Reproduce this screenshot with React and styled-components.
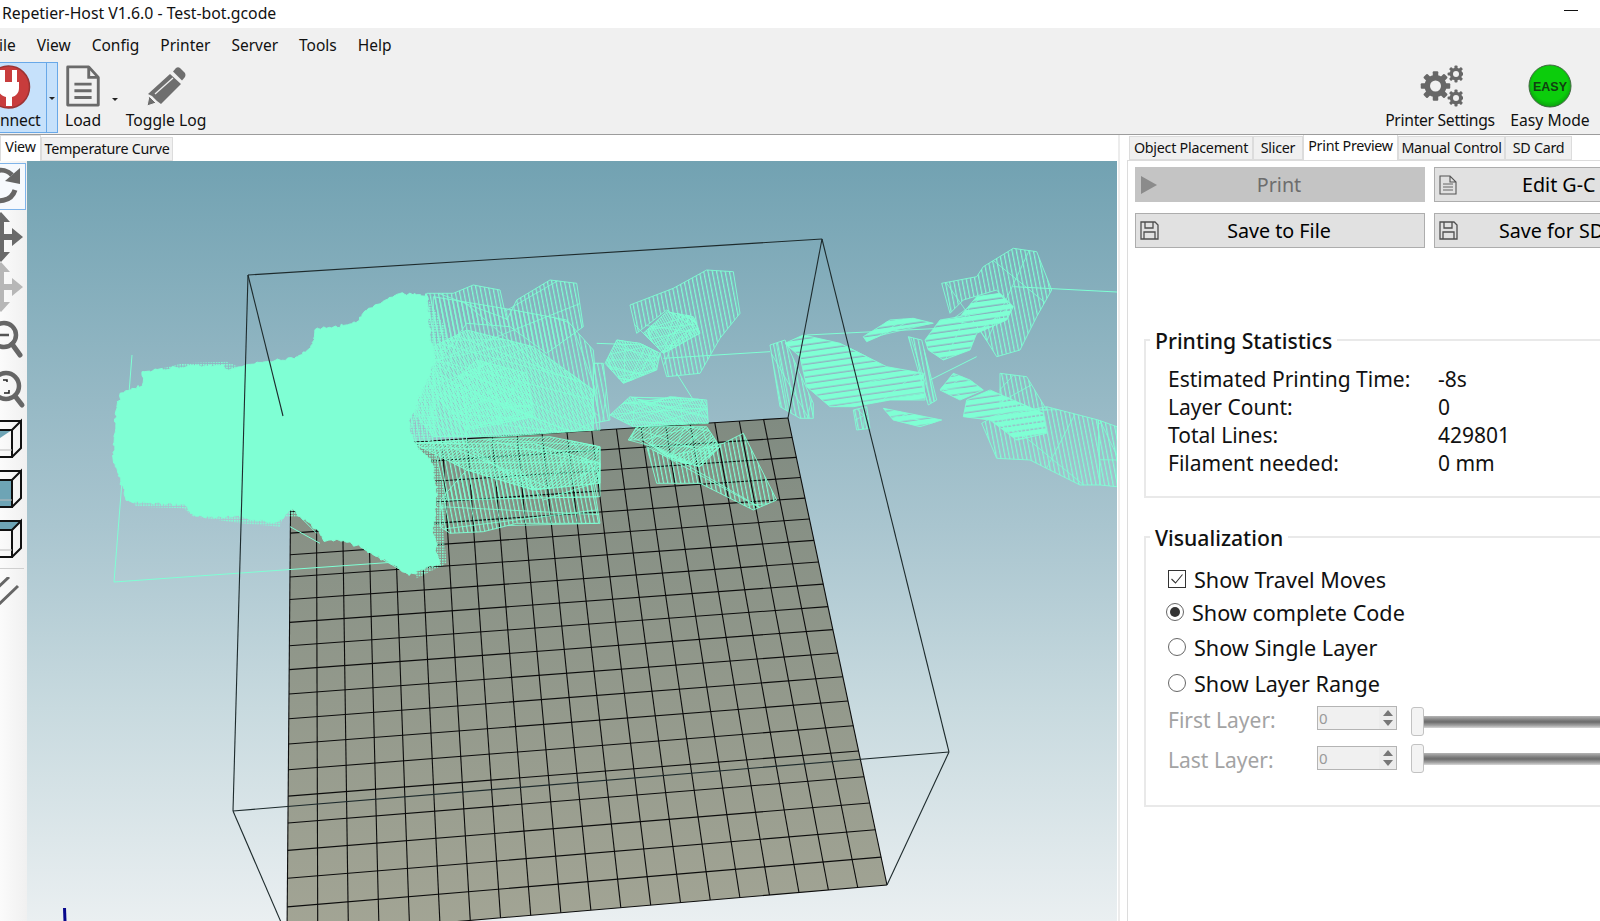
import React from "react";
import styled, { createGlobalStyle } from "styled-components";

const FONT = `"Noto Sans", "Open Sans", "Liberation Sans", sans-serif`;
const AQUA = "#7fffd4";

const Global = createGlobalStyle`
  html, body { margin: 0; padding: 0; background: #fff; overflow: hidden; }
  #root { width: 1600px; height: 921px; }
`;

const Shell = styled.div`
  width: 1600px; height: 921px; overflow: hidden; display: flex; flex-direction: column;
  font-family: ${FONT}; color: #111; background: #fff;
`;
const TitleBar = styled.div`
  height: 28px; flex: none; display: flex; align-items: center; justify-content: space-between;
  padding: 0 22px 2px 2px; font-size: 15.8px; box-sizing: border-box;
`;
const MinimizeMark = styled.div`width: 14px; height: 1px; background: #111; margin-top: -6px;`;
const Ribbon = styled.header`
  height: 107px; flex: none; box-sizing: border-box; background: #f0f0f0; border-bottom: 1px solid #9c9c9c;
  display: flex; flex-direction: column;
`;
const MenuBar = styled.nav`
  height: 32px; flex: none; display: flex; align-items: center; gap: 21px; font-size: 15.5px; padding-top: 1px; box-sizing: border-box; margin-left: -1px;
`;
const MenuItem = styled.span``;
const ToolRow = styled.div`display: flex; justify-content: space-between; height: 73px; align-items: flex-start;`;
const ToolGroup = styled.div`display: flex; align-items: flex-start; padding-right: ${(p) => p.$pr || 0}px;`;
const SplitButton = styled.div`
  display: flex; height: 71px; width: 58px; margin-top: 2px; box-sizing: border-box; background: #c6e1fb; border: 1px solid #68a8e8; border-left: 0;
`;
const SplitMain = styled.div`
  width: 47px; box-sizing: border-box; border-right: 1px solid #68a8e8; display: flex; flex-direction: column; overflow: hidden;
`;
const SplitArrow = styled.div`flex: 1; display: flex; justify-content: center; padding-top: 34px; box-sizing: border-box;`;
const Caret = styled.span`
  width: 0; height: 0; border-left: 3px solid transparent; border-right: 3px solid transparent; border-top: 3px solid #222;
  margin: ${(p) => p.$margin || 0};
`;
const ToolLabel = styled.span`
  font-size: 15.7px; line-height: 22px; white-space: nowrap; letter-spacing: ${(p) => p.$track || 0}px;
`;
const ConnectLabel = styled(ToolLabel)`margin: -1px 0 0 0; letter-spacing: -0.2px;`;
const Tool = styled.div`
  display: flex; flex-direction: column; align-items: center; width: ${(p) => p.$w}px; margin-left: ${(p) => p.$ml || 0}px; flex: none; padding-top: 3px;
`;
const IconSlot = styled.div`height: 46px; display: flex; align-items: center; justify-content: center; flex: none;`;
const ToolIcon = styled.svg`display: block; flex: none;`;

const Body = styled.div`flex: 1; display: flex; min-height: 0;`;
const LeftPane = styled.section`width: 1120px; flex: none; display: flex; flex-direction: column; border-right: 2px solid #ececec; box-sizing: border-box;`;
const TabStrip = styled.div`height: 26px; flex: none; display: flex; align-items: flex-end; padding-left: ${(p) => p.$pad || 0}px;`;
const Tab = styled.div`
  box-sizing: border-box; height: ${(p) => (p.$active ? 26 : 24)}px; width: ${(p) => p.$w}px; display: flex; align-items: center; justify-content: center;
  font-size: 14.3px; letter-spacing: -0.25px; white-space: nowrap; background: ${(p) => (p.$active ? "#fff" : "#f0f0f0")};
  border: 1px solid #dcdcdc; border-bottom: ${(p) => (p.$active ? "0" : "1px solid #dcdcdc")};
  padding-bottom: ${(p) => (p.$active ? 4 : 1)}px;
`;
const ViewerRow = styled.div`flex: 1; display: flex; min-height: 0; width: 1117px;`;
const ViewBar = styled.aside`
  width: 27px; flex: none; box-sizing: border-box; padding-top: 1px; background: linear-gradient(90deg, #fbfbfb, #f0f0f0);
  display: flex; flex-direction: column;
`;
const ViewBtn = styled.div`
  height: 50px; flex: none; box-sizing: border-box; overflow: hidden; width: 26px;
  ${(p) => p.$on && "border: 1px solid #7fb4ea; border-left: 0; height: 47px; margin: 1px 0 2px; background: #f6f9fd;"}
`;
const ViewIcon = styled.svg`display: block; margin-left: -20px; flex: none;`;
const ViewSep = styled.div`height: 1px; background: #cfcfcf; width: 24px; margin: 6px 0 8px;`;
const Scene = styled.svg`
  flex: 1; display: block; min-width: 0; height: 760px;
  background: linear-gradient(180deg, #72a2b2 0%, #a9c5cf 48%, #c8dadf 72%, #eaeff1 100%);
`;

const RightPane = styled.section`flex: 1; display: flex; flex-direction: column; margin-left: 7px; min-width: 0; overflow: hidden;`;
const RightTabs = styled(TabStrip)`border-bottom: 1px solid #dcdcdc; box-sizing: content-box; height: 25px;`;
const PanelBody = styled.div`
  flex: 1; border-left: 1px solid #dcdcdc; padding: 6px 0 0 7px; display: flex; flex-direction: column; width: 480px; box-sizing: border-box;
`;
const ActionGrid = styled.div`display: grid; grid-template-columns: 290px 290px; column-gap: 9px; row-gap: 11px;`;
const ActionBtn = styled.div`
  height: 35px; box-sizing: border-box; display: grid; grid-template-columns: 27px 1fr 29px; align-items: center; font-size: 19.7px;
  background: ${(p) => (p.$disabled ? "#c4c4c4" : "#e1e1e1")}; color: ${(p) => (p.$disabled ? "#6d6d6d" : "#000")};
  border: 1px solid ${(p) => (p.$disabled ? "#c4c4c4" : "#adadad")}; white-space: nowrap;
`;
const ActionIcon = styled.svg`display: block; margin-left: 4px;`;
const ActionText = styled.span`
  text-align: ${(p) => (p.$inset ? "left" : "center")}; padding-left: ${(p) => p.$inset || 0}px;
`;
const Group = styled.div`
  position: relative; width: 470px; box-sizing: border-box; border: 2px solid #e9e9e9; border-right: 0; margin-left: 9px;
  height: ${(p) => p.$h}px; margin-top: ${(p) => p.$mt}px; padding: ${(p) => p.$pad};
`;
const Legend = styled.div`
  position: absolute; left: 4px; top: -14px; height: 28px; line-height: 27px; background: #fff; padding: 0 5px; font-size: 21.2px; font-weight: 500;
`;
const StatGrid = styled.div`display: grid; grid-template-columns: 270px 1fr; grid-auto-rows: 28px; align-items: center; font-size: 21px;`;
const Stat = styled.span``;
const OptionRow = styled.div`
  display: flex; align-items: center; height: ${(p) => p.$h}px; font-size: 21.6px; gap: ${(p) => p.$gap || 8}px; margin-left: ${(p) => p.$ml || 0}px;
`;
const CheckBox = styled.span`
  width: 18px; height: 18px; box-sizing: border-box; border: 1px solid #333; display: flex; align-items: center; justify-content: center; background: #fff;
`;
const Radio = styled.span`
  width: 18px; height: 18px; box-sizing: border-box; border-radius: 50%; border: 1px solid #666; display: flex; align-items: center; justify-content: center; background: #fff;
  &::after { content: ""; width: 10px; height: 10px; border-radius: 50%; background: ${(p) => (p.$on ? "#333" : "transparent")}; }
`;
const LayerRow = styled.div`display: flex; align-items: center; height: 40px; color: #a3a3a3; font-size: 21px;`;
const LayerName = styled.span`width: 149px; flex: none;`;
const Spinner = styled.div`
  width: 80px; height: 24px; box-sizing: border-box; border: 1px solid #b4b4b4; background: #f0f0f0; display: flex; justify-content: space-between; align-items: center;
  padding-left: 1px; font-size: 15px; color: #9a9a9a; flex: none; margin-top: -4px;
`;
const SpinArrows = styled.div`width: 17px; height: 22px; display: flex; flex-direction: column; align-items: center; justify-content: space-around; background: #ececec; padding: 1px 0; box-sizing: border-box;`;
const SpinUp = styled.span`border-left: 5px solid transparent; border-right: 5px solid transparent; border-bottom: 6px solid #777;`;
const SpinDown = styled.span`border-left: 5px solid transparent; border-right: 5px solid transparent; border-top: 6px solid #777;`;
const Slider = styled.div`
  position: relative; flex: 1; height: 12px; margin: ${(p) => p.$dy}px 0 0 14px;
  background: linear-gradient(180deg, #b5b5b5, #7c7c7c 35%, #6c6c6c 50%, #a5a5a5 80%, #d8d8d8);
`;
const Thumb = styled.span`position: absolute; left: 0; top: -9px; width: 13px; height: 29px; box-sizing: border-box; border: 1px solid #c2c2c2; border-radius: 3px; background: #f3f3f3;`;

/* ---- 3D scene data: outlines are kept in the pixel space of two reference regions ---- */
const fromA = (a) => { const o = []; for (let i = 0; i < a.length; i += 2) o.push([100 + a[i] / 3, 230 + a[i + 1] / 3]); return o; };
const fromB = (a) => { const o = []; for (let i = 0; i < a.length; i += 2) o.push([600 + a[i] / 3, 230 + a[i + 1] / 3]); return o; };
const pts = (p) => p.map((q) => q.map((n) => n.toFixed(1)).join(",")).join(" ");

let seed = 11;
const rnd = () => { seed = (seed * 16807) % 2147483647; return seed / 2147483647; };
const jag = (p, step, amp) => {
  const out = [];
  p.forEach((a, i) => {
    const b = p[(i + 1) % p.length];
    const n = Math.max(1, Math.round(Math.hypot(b[0] - a[0], b[1] - a[1]) / step));
    for (let k = 0; k < n; k++) {
      const t = k / n;
      out.push([a[0] + (b[0] - a[0]) * t + (rnd() - 0.5) * amp, a[1] + (b[1] - a[1]) * t + (rnd() - 0.5) * amp]);
    }
  });
  return out;
};
const edgePoint = (p) => {
  const i = Math.floor(rnd() * p.length), a = p[i], b = p[(i + 1) % p.length], t = rnd();
  return [a[0] + (b[0] - a[0]) * t, a[1] + (b[1] - a[1]) * t];
};

const MASS = fromA([980,195,900,190,850,215,790,250,770,275,710,290,650,295,635,350,600,380,440,405,380,420,370,405,250,410,130,425,125,465,65,490,50,520,40,680,65,770,85,815,250,825,285,860,420,860,530,880,575,835,590,850,650,900,670,935,730,930,800,960,930,1035,1015,1000,1000,900,1010,800,995,690,950,650,925,590,960,500,1000,400,990,300]);

const REGIONS = [
  ["hd", fromA([980,200,1040,300,1020,480,1000,640,1010,680,1040,800,1030,900,1040,1000,950,1045,900,640])],
  ["hd", fromA([125,430,250,400,380,395,440,420,130,470])],
  ["hd", fromA([80,800,250,800,290,860,420,880,540,890,570,790,600,860,280,860,250,835,110,830])],
  ["hv", fromA([980,190,1060,190,1120,165,1200,180,1220,270,1250,210,1350,150,1430,160,1450,290,1340,370,1230,290,1100,280,1020,390,985,400])],
  ["hv", fromA([1000,200,1240,240,1400,270,1480,360,1500,600,1000,620])],
  ["hf", fromA([1000,350,1100,300,1300,350,1480,480,1480,600,1200,620,1000,620,920,520])],
  ["hf", fromA([1010,500,1130,390,1280,430,1300,560,1100,600])],
  ["hv", fromA([880,520,1000,420,1100,480,1100,640,880,640])],
  ["hf2", fromA([940,640,1100,630,1350,620,1500,650,1500,760,1300,780,1100,720])],
  ["hv", fromA([1020,810,1100,720,1260,720,1330,810,1480,760,1500,880,1400,880,1250,880,1150,905,1050,910,1020,890])],
  ["hv", fromA([1000,640,1300,640,1500,700,1500,800,1040,810])],
  ["hf", fromB([15,400,50,330,120,340,180,370,170,420,70,460])],
  ["hf", fromB([130,310,200,245,280,260,300,310,190,370])],
  ["hv", fromB([90,225,220,175,320,120,400,125,420,250,360,325,300,430,200,440,180,370,280,290,200,240,110,310])],
  ["hv", fromB([-20,400,10,400,30,570,-20,580])],
  ["hf", fromB([30,555,90,500,150,520,210,500,320,510,325,580,100,590])],
  ["hv", fromB([140,650,200,680,370,640,430,610,530,810,460,840,300,760,170,760])],
  ["hf2", fromB([85,630,110,590,320,590,360,650,300,710,220,690,130,630])],
  ["hv", fromB([510,345,555,330,640,520,640,565,600,565,540,530])],
  ["hh", fromB([555,340,610,315,720,340,860,410,970,430,975,510,870,510,760,530,690,530,620,470,600,380])],
  ["hv", fromB([760,540,800,530,810,595,770,600])],
  ["hv", fromB([925,320,965,330,1010,510,985,525])],
  ["hh", fromB([790,320,870,270,940,265,1000,280,880,300,800,335])],
  ["hv", fromB([1025,160,1130,140,1150,110,1240,55,1310,65,1355,180,1310,260,1260,360,1190,380,1140,300,1230,230,1190,180,1090,210,1050,250])],
  ["hh", fromB([975,330,1020,270,1080,260,1130,200,1200,190,1240,230,1220,270,1130,310,1110,360,1030,390,985,360])],
  ["hv", fromB([1145,580,1180,560,1340,530,1495,570,1500,765,1440,765,1330,710,1290,690,1190,685])],
  ["hv", fromB([1495,570,1551,590,1551,770,1500,765])],
  ["hv", fromB([1200,430,1280,440,1340,540,1200,540])],
  ["hh", fromB([1020,480,1060,430,1110,450,1150,480,1080,510])],
  ["hh", fromB([1090,560,1100,510,1170,480,1330,550,1340,610,1250,630,1170,570])],
  ["hh", fromB([850,535,1025,570,960,590,880,570])],
];
const SCRIBBLES = [];
REGIONS.forEach(([h, p]) => {
  if (h === "hd") return;
  const count = h === "hv" ? 3 : h === "hh" ? 5 : 26;
  for (let i = 0; i < count; i++) SCRIBBLES.push([edgePoint(p), edgePoint(p)]);
});
const THIN = [
  [[132,355],[114,582]], [[114,582],[410,561]],
  ...[[[190,385],[510,365]], [[620,315],[1020,295]], [[990,450],[1130,380]], [[1240,170],[1551,186]], [[-10,340],[130,345]], [[230,430],[280,510]]].map((s) => fromB(s.flat())),
  ...[[[570,890],[660,940]], [[590,850],[650,910]], [[780,950],[930,1035]]].map((s) => fromA(s.flat())),
];

/* projective map of the unit square to the print bed */
const bed = [[291,450],[788,418],[887,885],[287,936]];
const homography = ([a, b, c, d]) => {
  const dx1 = b[0] - c[0], dx2 = d[0] - c[0], sx = a[0] - b[0] + c[0] - d[0];
  const dy1 = b[1] - c[1], dy2 = d[1] - c[1], sy = a[1] - b[1] + c[1] - d[1];
  const den = dx1 * dy2 - dx2 * dy1;
  const g = (sx * dy2 - dx2 * sy) / den, h = (dx1 * sy - sx * dy1) / den;
  return (u, v) => {
    const w = g * u + h * v + 1;
    return [((b[0] - a[0] + g * b[0]) * u + (d[0] - a[0] + h * d[0]) * v + a[0]) / w,
            ((b[1] - a[1] + g * b[1]) * u + (d[1] - a[1] + h * d[1]) * v + a[1]) / w];
  };
};
const bedAt = homography(bed);
const gridLines = [];
for (let i = 0; i <= 20; i++) {
  gridLines.push([bedAt(i / 20, 0), bedAt(i / 20, 1)]);
  gridLines.push([bedAt(0, i / 20), bedAt(1, i / 20)]);
}
const BOX = [
  [[248,275],[822,239]], [[248,275],[233,811]], [[822,239],[949,752]], [[233,811],[949,752]],
  [[248,275],[283,416]], [[822,239],[788,418]], [[233,811],[287,936]], [[949,752],[887,885]],
];

const Hatch = ({ id, gap, width, angle, color = AQUA }) => (
  <pattern id={id} width={gap} height={gap} patternUnits="userSpaceOnUse" patternTransform={`rotate(${angle})`}>
    <rect x="0" y="0" width={width} height={gap} fill={color} />
  </pattern>
);

const ViewerScene = () => (
  <Scene viewBox="27 161 1090 760" preserveAspectRatio="none">
    <defs>
      <linearGradient id="bedFill" x1="0" y1="0" x2="0" y2="1">
        <stop offset="0" stopColor="#808b81" /><stop offset="1" stopColor="#a3a595" />
      </linearGradient>
      <Hatch id="hv" gap={4.2} width={1.2} angle={-11} />
      <Hatch id="hf" gap={2.2} width={1.2} angle={-30} />
      <Hatch id="hf2" gap={2.4} width={1.2} angle={50} />
      <Hatch id="hh" gap={6.4} width={5} angle={82} />
      <pattern id="hd" width="2.6" height="2.6" patternUnits="userSpaceOnUse">
        <rect width="1.6" height="1.6" fill={AQUA} />
      </pattern>
    </defs>
    <polygon points={pts(bed)} fill="url(#bedFill)" />
    {gridLines.map((l, i) => (
      <line key={i} x1={l[0][0]} y1={l[0][1]} x2={l[1][0]} y2={l[1][1]} stroke="#0c0c0c" strokeWidth="1.1" />
    ))}
    {REGIONS.map(([h, p], i) => (
      <polygon key={i} points={pts(p)} fill={`url(#${h})`} stroke={h === "hd" ? "none" : AQUA} strokeWidth="0.9" strokeLinejoin="round" />
    ))}
    {SCRIBBLES.map((l, i) => (
      <line key={i} x1={l[0][0]} y1={l[0][1]} x2={l[1][0]} y2={l[1][1]} stroke={AQUA} strokeWidth="0.8" />
    ))}
    {THIN.map((l, i) => (
      <line key={i} x1={l[0][0]} y1={l[0][1]} x2={l[1][0]} y2={l[1][1]} stroke={AQUA} strokeWidth="1" />
    ))}
    <polygon points={pts(jag(MASS, 2.5, 3))} fill={AQUA} stroke={AQUA} strokeWidth="1" />
    {BOX.map((l, i) => (
      <line key={i} x1={l[0][0]} y1={l[0][1]} x2={l[1][0]} y2={l[1][1]} stroke="#1d2a2c" strokeWidth="1.1" />
    ))}
    <line x1="64.5" y1="908" x2="65" y2="921" stroke="#07078c" strokeWidth="3" />
  </Scene>
);

/* ---- icons ---- */
const Plug = () => (
  <ToolIcon width="47" height="46" viewBox="0 0 47 46" style={{ marginTop: 1 }}>
    <circle cx="8.5" cy="23" r="21" fill="#c83c3c" stroke="#9b3434" strokeWidth="1.5" />
    <path d="M-2 18h21v6c0 5-3 8-7 9v9H6v-9c-4-1-8-4-8-9z" fill="#fff" />
    <rect x="0" y="6" width="5" height="13" fill="#fff" />
    <rect x="12" y="6" width="5" height="13" fill="#fff" />
  </ToolIcon>
);
const LoadDoc = () => (
  <ToolIcon width="36" height="42" viewBox="0 0 36 44">
    <path d="M2 2h22l10 11v29H2z" fill="none" stroke="#6a6a6a" strokeWidth="3" strokeLinejoin="round" />
    <path d="M24 2v11h10" fill="none" stroke="#6a6a6a" strokeWidth="3" />
    <path d="M9 20h18M9 27h18M9 34h18" stroke="#6a6a6a" strokeWidth="3" />
  </ToolIcon>
);
const Pencil = () => (
  <ToolIcon width="40" height="40" viewBox="0 0 40 40">
    <path d="M27 5.5l3-3.5q2-1.5 4 0l5 5q1 2 0 4l-3 3.5z" fill="#6e6e6e" />
    <path d="M24 8l11 10-20 20-4-3-5-5-4-2z" fill="#6e6e6e" />
    <path d="M9 28L27 12" stroke="#f0f0f0" strokeWidth="1.4" />
    <path d="M3 30l7 7-9 3z" fill="#6e6e6e" stroke="#f0f0f0" strokeWidth="1" />
  </ToolIcon>
);
const Gear = ({ cx, cy, r, teeth, hole }) => {
  const w = r * 0.5;
  return (
    <g>
      {Array.from({ length: teeth }).map((_, i) => (
        <rect key={i} x={cx - w / 2} y={cy - r * 1.34} width={w} height={r * 2.68} rx="1" fill="#676767" transform={`rotate(${(i * 180) / teeth} ${cx} ${cy})`} />
      ))}
      <circle cx={cx} cy={cy} r={r} fill="#676767" />
      <circle cx={cx} cy={cy} r={hole} fill="#f0f0f0" />
    </g>
  );
};
const Gears = () => (
  <ToolIcon width="46" height="42" viewBox="-3 0 46 42">
    <Gear cx="15.5" cy="21" r="11" teeth="4" hole="5.5" />
    <Gear cx="36" cy="9" r="6.3" teeth="4" hole="3" />
    <Gear cx="36" cy="33" r="6.3" teeth="4" hole="3" />
  </ToolIcon>
);
const EasyBall = () => (
  <ToolIcon width="44" height="44" viewBox="0 0 44 44">
    <defs>
      <radialGradient id="easyGreen" cx="0.5" cy="0.45" r="0.55">
        <stop offset="0.75" stopColor="#0ccd0c" /><stop offset="1" stopColor="#0d9f10" />
      </radialGradient>
    </defs>
    <circle cx="22" cy="22" r="21" fill="url(#easyGreen)" stroke="#3f6a3f" strokeWidth="1" />
    <text x="22" y="26.5" textAnchor="middle" fontFamily={`"Liberation Sans", sans-serif`} fontWeight="700" fontSize="12.5" fill="#123f12">EASY</text>
  </ToolIcon>
);

const VI = ({ children }) => (
  <ViewIcon width="47" height="50" viewBox="-20 0 47 50">{children}</ViewIcon>
);
const Arrows = ({ c }) => (
  <g fill={c} stroke="none">
    <rect x="-2" y="6" width="6" height="38" />
    <rect x="-20" y="22" width="34" height="6" />
    <path d="M1 0l9 10H-8zM1 50l9-10H-8zM23 25l-11-9v18z" />
  </g>
);
const Cube = ({ kind }) => (
  <g fill="none" stroke="#111" strokeWidth="2">
    {kind === "diag" && <path d="M-15 18h27l-27 18z" fill="#6ea4b5" stroke="none" />}
    {kind === "face" && <rect x="-15" y="18" width="27" height="27" fill="#6ea4b5" stroke="none" />}
    {kind === "top" && <path d="M-15 18h27l9-9H-6z" fill="#6ea4b5" stroke="none" />}
    <path d="M-15 18h27v27h-27M12 18l9-9v27l-9 9M21 9H-6" />
    <path d="M-15 38h27" stroke="#bbb" strokeWidth="1" />
  </g>
);
const ViewTools = () => (
  <ViewBar>
    <ViewBtn $on>
      <VI>
        <path d="M-14 21A15 15 0 0 1 12 11" fill="none" stroke="#666" strokeWidth="5" />
        <path d="M20 4v16l-15-3z" fill="#666" />
        <path d="M15 26A15 15 0 0 1-11 31" fill="none" stroke="#666" strokeWidth="5" />
      </VI>
    </ViewBtn>
    <ViewBtn><VI><Arrows c="#6a6a6a" /></VI></ViewBtn>
    <ViewBtn><VI><Arrows c="#b7b7b7" /></VI></ViewBtn>
    <ViewBtn>
      <VI>
        <circle cx="4" cy="23" r="12" fill="none" stroke="#666" strokeWidth="4.5" />
        <path d="M-6 23H9" stroke="#555" strokeWidth="2.5" />
        <path d="M12 32l8 11" stroke="#666" strokeWidth="5" strokeLinecap="round" />
      </VI>
    </ViewBtn>
    <ViewBtn>
      <VI>
        <circle cx="6" cy="24" r="13" fill="none" stroke="#666" strokeWidth="4.5" />
        <path d="M15 34l7 9" stroke="#666" strokeWidth="5" strokeLinecap="round" />
        <path d="M3 18h4v2M9 28v3H4" fill="none" stroke="#222" strokeWidth="1.5" />
      </VI>
    </ViewBtn>
    <ViewBtn><VI><Cube kind="diag" /></VI></ViewBtn>
    <ViewBtn><VI><Cube kind="face" /></VI></ViewBtn>
    <ViewBtn><VI><Cube kind="top" /></VI></ViewBtn>
    <ViewSep />
    <ViewBtn>
      <VI>
        <path d="M-8 16L9 0M-6 32L18 9" stroke="#666" strokeWidth="3" fill="none" />
      </VI>
    </ViewBtn>
  </ViewBar>
);

const FileGlyph = () => (
  <ActionIcon width="18" height="20" viewBox="0 0 18 20">
    <path d="M1 1h10l6 6v12H1zM11 1v6h6" fill="none" stroke="#555" strokeWidth="1.1" />
    <path d="M4 9h10M4 12h10M4 15h10" stroke="#666" strokeWidth="1" />
  </ActionIcon>
);
const SaveGlyph = () => (
  <ActionIcon width="19" height="19" viewBox="0 0 19 19">
    <path d="M1 1h14l3 3v14H1z" fill="none" stroke="#4f4f4f" strokeWidth="1.3" />
    <path d="M5 1v6h8V1M4 18v-7h11v7" fill="none" stroke="#4f4f4f" strokeWidth="1.3" />
  </ActionIcon>
);
const PlayGlyph = () => (
  <ActionIcon width="18" height="20" viewBox="0 0 18 20"><path d="M1 1l16 9-16 9z" fill="#8b8b8b" /></ActionIcon>
);

const STATS = [
  ["Estimated Printing Time:", "-8s"],
  ["Layer Count:", "0"],
  ["Total Lines:", "429801"],
  ["Filament needed:", "0 mm"],
];
const MENU = ["ile", "View", "Config", "Printer", "Server", "Tools", "Help"];

const LayerControl = ({ label, dy }) => (
  <LayerRow>
    <LayerName>{label}</LayerName>
    <Spinner>0<SpinArrows><SpinUp /><SpinDown /></SpinArrows></Spinner>
    <Slider $dy={dy}><Thumb /></Slider>
  </LayerRow>
);

export default function App() {
  return (
    <Shell>
      <Global />
      <TitleBar>
        <span>Repetier-Host V1.6.0 - Test-bot.gcode</span>
        <MinimizeMark />
      </TitleBar>
      <Ribbon>
        <MenuBar>
          {MENU.map((m) => <MenuItem key={m}>{m}</MenuItem>)}
        </MenuBar>
        <ToolRow>
          <ToolGroup>
            <SplitButton>
              <SplitMain>
                <Plug />
                <ConnectLabel>nnect</ConnectLabel>
              </SplitMain>
              <SplitArrow><Caret /></SplitArrow>
            </SplitButton>
            <Tool $w={46} $ml={2}>
              <IconSlot><LoadDoc /></IconSlot>
              <ToolLabel>Load</ToolLabel>
            </Tool>
            <Caret $margin="38px 0 0 6px" />
            <Tool $w={90} $ml={3}>
              <IconSlot><Pencil /></IconSlot>
              <ToolLabel>Toggle Log</ToolLabel>
            </Tool>
          </ToolGroup>
          <ToolGroup $pr={7}>
            <Tool $w={118}>
              <IconSlot><Gears /></IconSlot>
              <ToolLabel $track={-0.3}>Printer Settings</ToolLabel>
            </Tool>
            <Tool $w={86} $ml={8}>
              <IconSlot><EasyBall /></IconSlot>
              <ToolLabel>Easy Mode</ToolLabel>
            </Tool>
          </ToolGroup>
        </ToolRow>
      </Ribbon>
      <Body>
        <LeftPane>
          <TabStrip>
            <Tab $active $w={41}>View</Tab>
            <Tab $w={132}>Temperature Curve</Tab>
          </TabStrip>
          <ViewerRow>
            <ViewTools />
            <ViewerScene />
          </ViewerRow>
        </LeftPane>
        <RightPane>
          <RightTabs $pad={2}>
            <Tab $w={124}>Object Placement</Tab>
            <Tab $w={50}>Slicer</Tab>
            <Tab $active $w={95}>Print Preview</Tab>
            <Tab $w={107}>Manual Control</Tab>
            <Tab $w={67}>SD Card</Tab>
          </RightTabs>
          <PanelBody>
            <ActionGrid>
              <ActionBtn $disabled><PlayGlyph /><ActionText>Print</ActionText></ActionBtn>
              <ActionBtn><FileGlyph /><ActionText $inset={60}>Edit G-C</ActionText></ActionBtn>
              <ActionBtn><SaveGlyph /><ActionText>Save to File</ActionText></ActionBtn>
              <ActionBtn><SaveGlyph /><ActionText $inset={37}>Save for SD</ActionText></ActionBtn>
            </ActionGrid>
            <Group $h={159} $mt={91} $pad="24px 0 0 22px">
              <Legend>Printing Statistics</Legend>
              <StatGrid>
                {STATS.map(([k, v]) => (
                  <React.Fragment key={k}><Stat>{k}</Stat><Stat>{v}</Stat></React.Fragment>
                ))}
              </StatGrid>
            </Group>
            <Group $h={271} $mt={38} $pad="24px 0 0 22px">
              <Legend>Visualization</Legend>
              <OptionRow $h={34}>
                <CheckBox>
                  <svg width="14" height="12" viewBox="0 0 14 12"><path d="M1.5 6l4 4 7-8.5" fill="none" stroke="#333" strokeWidth="1.1" /></svg>
                </CheckBox>
                Show Travel Moves
              </OptionRow>
              <OptionRow $h={32} $ml={-2}><Radio $on />Show complete Code</OptionRow>
              <OptionRow $h={38}><Radio />Show Single Layer</OptionRow>
              <OptionRow $h={34}><Radio />Show Layer Range</OptionRow>
              <LayerControl label="First Layer:" dy={4} />
              <LayerControl label="Last Layer:" dy={-2} />
            </Group>
          </PanelBody>
        </RightPane>
      </Body>
    </Shell>
  );
}
